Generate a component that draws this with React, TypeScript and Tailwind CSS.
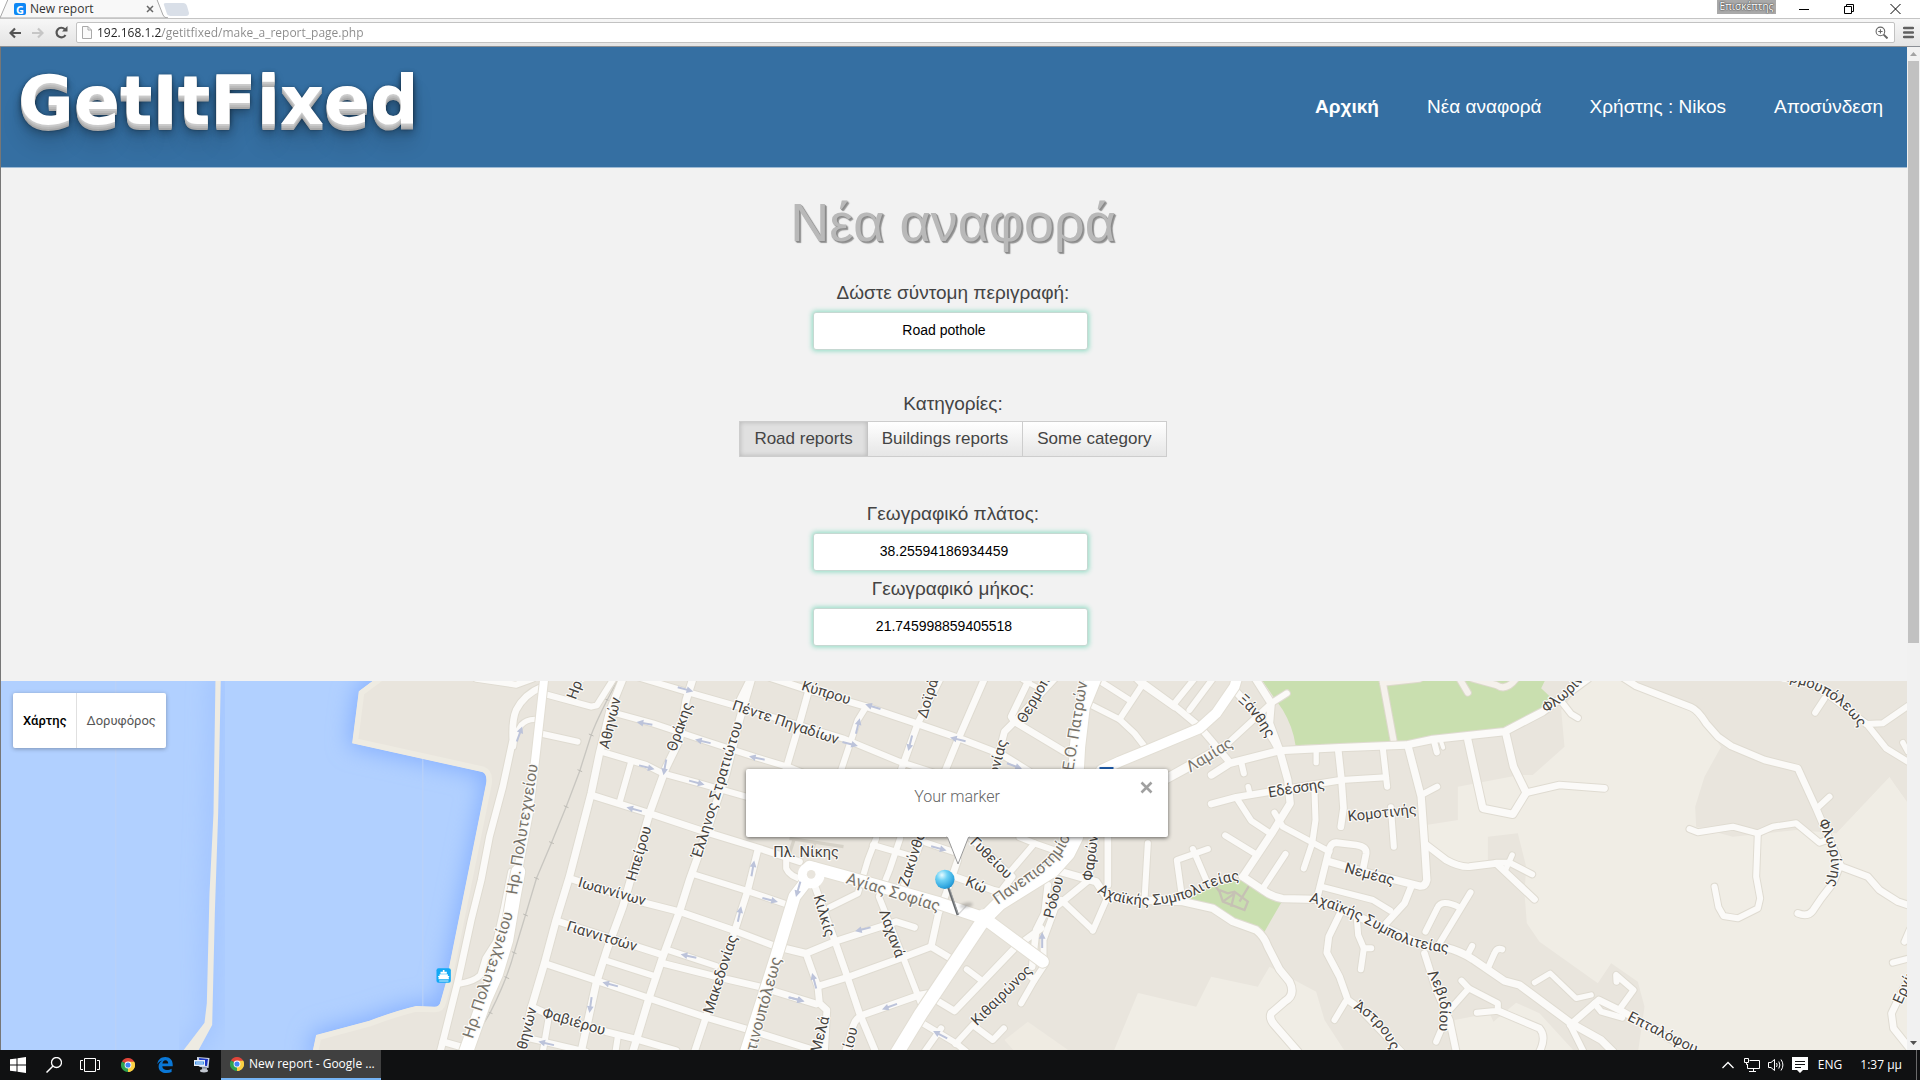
import React from "react";

/* ---------- Map data: each path lives on a tile that starts at x = tile px, in thirds of a pixel ---------- */

type Road = [tile: number, width: number, d: string];

const ROADS: Road[] = [
  // harbour front
  [400, 18, "M230 -4L350 14L400 -4"],
  [400, 20, "M425 22Q375 42 350 90Q337 120 340 180L325 250L310 320L270 470L245 600L215 720L175 905L130 1085L122 1115"],
  [400, 16, "M405 118Q380 118 365 135Q345 165 342 200"],
  [400, 18, "M430 162L534 185"],
  [400, 18, "M435 42L575 80L592 76L640 0"],
  [400, 18, "M335 575L312 690L290 785L258 835L243 885Q225 905 175 912"],
  [400, 20, "M130 1085L200 1105"],
  // west grid
  [400, 22, "M670 -4L632 90L600 220L575 340L510 590L470 720L435 850L395 985L370 1115"],
  [400, 18, "M690 -16L870 38L1000 75L1330 175L1500 245L1640 290"],
  [400, 18, "M650 100L760 130L910 180L1070 232L1170 262L1240 290"],
  [400, 18, "M605 215L740 255L790 280L900 310L1040 350"],
  [400, 20, "M575 345L750 400L900 450L1080 505L1200 545"],
  [400, 20, "M510 595L740 670L840 695L1000 750L1130 800L1210 820"],
  [400, 18, "M880 582L1040 632L1170 676"],
  [400, 20, "M470 722L790 825"],
  [400, 18, "M800 808L950 858"],
  [400, 20, "M790 850L950 890L1080 920L1250 972"],
  [400, 18, "M620 842L770 890"],
  [400, 20, "M435 850L600 905L750 955L920 1012L1050 1050L1240 1110"],
  [400, 20, "M395 980L440 1000L620 1055L720 1080L830 1112"],
  [400, 18, "M655 1070L648 1115"],
  [400, 18, "M448 1010L430 1115"],
  [400, 18, "M390 1075L560 1115"],
  [400, 18, "M695 245L660 368"],
  [400, 22, "M880 -4L860 60L840 180L800 262L750 400L710 540L670 680L622 810L590 910L545 1115"],
  [400, 22, "M1056 -4L1020 120L980 280L920 460L870 600L840 695L790 830L750 950L700 1115"],
  [400, 20, "M1075 510L1045 630L1000 770L920 1010L885 1115"],
  // centre
  [740, 20, "M205 40L180 130L140 265"],
  [740, 18, "M30 0L0 60"],
  [740, 20, "M90 -8L200 28L380 80L530 130L660 175L790 225L870 275"],
  [740, 18, "M380 80L355 120L305 270"],
  [740, 20, "M602 -4L535 130L485 270"],
  [740, 20, "M735 -4L655 180L618 270"],
  [740, 20, "M870 -4L815 110L825 125"],
  [740, 20, "M960 -20L825 125L795 155L765 270"],
  [740, 14, "M850 0L905 28"],
  [740, 20, "M825 125L975 215"],
  [740, 18, "M1045 70L1140 118L1185 160L1225 212"],
  [740, 18, "M1070 -4L1170 60"],
  [740, 18, "M1210 12L1140 118"],
  [740, 18, "M1190 -4L1210 15L1305 82"],
  [740, 20, "M1280 300L1350 262"],
  [740, 18, "M140 530L140 565Q150 590 195 600"],
  [740, 18, "M410 475L385 540L355 640L270 682"],
  [740, 18, "M482 475L450 570L418 650L490 830L550 985"],
  [740, 18, "M400 495L510 527"],
  [740, 20, "M548 475L500 600L485 640"],
  [740, 18, "M560 488L640 515"],
  [740, 20, "M655 540L620 640L597 700L575 800"],
  [740, 20, "M640 588L760 630L800 640"],
  [740, 20, "M695 475L818 590L780 640"],
  [740, 18, "M840 472L885 490L800 590"],
  [740, 18, "M885 490L965 518"],
  [740, 22, "M965 575L1070 605L1100 650L1200 665"],
  [740, 20, "M1065 475L1048 600L925 700"],
  [740, 20, "M1105 470L1105 615"],
  [740, 18, "M1225 490L1215 660"],
  [740, 20, "M925 615L915 700L890 750L878 860"],
  [740, 18, "M945 690L912 780L912 850"],
  [740, 18, "M965 660L1060 750"],
  [740, 18, "M1060 752L1100 660"],
  [740, 20, "M225 615L285 780L320 880L360 1000L408 1115"],
  [740, 20, "M100 796L200 820L285 785L430 738L470 725L525 742"],
  [740, 20, "M200 822L235 920L240 970L262 990L255 1115"],
  [740, 20, "M238 918L330 890L490 832L575 800L645 842"],
  [740, 20, "M318 1115L340 1040Q348 1012 375 1003L540 945L595 935"],
  [740, 20, "M590 960L645 993L830 800L905 745"],
  [740, 18, "M682 868L722 898"],
  [740, 18, "M550 1030L650 1090L680 1115"],
  [740, 18, "M555 1115L605 1045"],
  [740, 18, "M648 1092L700 1035L760 1080L793 1045"],
  [740, 18, "M862 880L885 900L845 970"],
  [740, 18, "M885 900L918 850"],
  // east
  [1140, 20, "M5 5L105 78L180 140L265 240"],
  [1140, 18, "M105 70L165 -4"],
  [1140, 18, "M150 90L220 -4"],
  [1140, 22, "M348 -4L395 70L390 130L420 210L445 300L452 370L400 455L310 590"],
  [1140, 22, "M285 30L350 100L402 180L420 212"],
  [1140, 18, "M442 40L395 70L265 190"],
  [1140, 20, "M85 290L160 248L265 190"],
  [1140, 22, "M216 285L270 250L420 212L600 203L800 195L880 178L1095 155L1210 95L1345 -4"],
  [1140, 18, "M305 245L313 280"],
  [1140, 16, "M530 212L530 248"],
  [1140, 18, "M884 185L892 217"],
  [1140, 12, "M905 185L911 203"],
  [1140, 20, "M596 208L606 300L612 385L604 440"],
  [1140, 18, "M730 205L743 320"],
  [1140, 18, "M606 300L740 292"],
  [1140, 22, "M806 200L845 350L855 490L862 600Q858 620 840 618L690 580L570 545"],
  [1140, 18, "M845 345L893 320"],
  [1140, 20, "M215 372L290 352L390 335L606 300"],
  [1140, 16, "M326 320L332 345"],
  [1140, 18, "M292 355L335 422L395 462"],
  [1140, 18, "M405 398L430 440L570 515"],
  [1140, 18, "M525 335L528 420L518 490L493 565"],
  [1140, 18, "M754 382L763 500"],
  [1140, 18, "M257 466L345 520"],
  [1140, 18, "M438 522L370 625"],
  [1140, 20, "M535 645L566 520Q572 488 590 488L650 495Q682 500 680 520L670 570"],
  [1140, 18, "M545 620L700 660L752 692"],
  [1140, 22, "M310 590L370 630Q400 652 430 656L530 658L740 745L860 800L920 803Q960 812 1000 838L1095 903L1140 915L1295 1030L1385 1080L1420 1115"],
  [1140, 22, "M0 660L130 665L220 685L280 725L350 750Q375 770 385 800L420 868L450 905Q470 945 435 965L395 1000Q388 1015 405 1035L475 1115"],
  [1140, 18, "M128 655L112 540L205 507"],
  [1140, 18, "M160 507L202 605"],
  [1140, 20, "M815 620L795 670L740 730"],
  [1140, 20, "M602 700L568 770L562 818L600 890L625 960L660 985L785 1115"],
  [1140, 18, "M618 965L585 1020"],
  [1140, 18, "M652 715L656 765L673 805L664 868"],
  [1140, 18, "M673 805L695 805"],
  [1140, 22, "M985 180L1030 385L1120 403L1160 338L1122 260L1100 165"],
  [1140, 20, "M1160 338L1260 315L1395 325"],
  [1140, 20, "M855 490L920 540Q960 562 990 560L1070 550L1185 658"],
  [1140, 18, "M1070 548L1110 548L1178 583"],
  [1140, 16, "M1118 525L1098 570"],
  [1140, 18, "M858 755L893 685Q905 655 960 682"],
  [1140, 18, "M993 637L900 790"],
  [1140, 20, "M855 820L890 930L930 1020L950 1115"],
  [1140, 18, "M890 1085L930 990L988 925L1075 970L1075 992L1012 998"],
  [1140, 18, "M966 902L988 925"],
  [1140, 20, "M1075 992L1200 1045Q1222 1070 1200 1115"],
  [1140, 18, "M982 828L998 798"],
  [1140, 18, "M1047 860L1065 820Q1072 802 1088 808"],
  [1140, 16, "M1185 908L1232 880L1310 955L1355 945"],
  // far east
  [1520, 20, "M310 -8L350 18L515 82Q535 90 560 130L595 170L635 198L735 240L835 265L890 385L965 560L1045 590L1080 630L1135 665L1175 678"],
  [1520, 18, "M892 385L930 350"],
  [1520, 20, "M958 565L940 610L905 655L880 692Q865 712 835 700"],
  [1520, 18, "M510 447L535 457L640 440L715 460L760 440L830 430L900 488L918 482"],
  [1520, 18, "M715 460L710 590L722 655L715 685L655 715L612 708L597 682L585 620"],
  [1520, 18, "M830 -12L920 40L1040 130L1100 205L1165 245"],
  [1520, 18, "M915 55L887 98"],
  [1520, 18, "M1040 132L1090 130L1165 78"],
  [1520, 16, "M1150 188L1165 215"],
  [1520, 18, "M130 70L155 102L175 114"],
  [1520, 18, "M1120 848L1170 835"],
  [1520, 18, "M1170 750L1155 785"],
  [1520, 20, "M1170 1105L1122 1045L1116 1000L1140 950L1170 890"],
  [1520, 20, "M152 1035L238 960L310 995L520 1115"],
  [1520, 18, "M300 988L342 930L290 885L291 905"],
  [1520, 18, "M225 970L245 995L308 1013"],
  [1520, 18, "M152 1035L192 1115"],
];

const PARK_ROADS: Road[] = [
  [1140, 18, "M728 -4L762 180"],
  [1140, 18, "M730 8L840 -4"],
  [1140, 18, "M960 -4L985 38"],
  [1140, 18, "M1000 -4L1070 15Q1100 35 1130 -4"],
];

const MAIN_ROADS: Road[] = [
  [400, 24, "M434 -4L408 230L388 400L355 575"],
  [400, 42, "M356 575L342 650L320 780L290 880L255 960L198 1120"],
  [740, 36, "M215 585L165 650L110 830L18 1120"],
  [740, 36, "M210 560L320 590L600 670L735 715L910 845"],
  [740, 40, "M735 715L545 1000L472 1120"],
  [740, 46, "M1062 -4L1028 80L1014 200L1010 270"],
  [740, 42, "M1010 470L985 520L940 570L780 670L735 715"],
  [740, 30, "M1085 270L1140 245L1225 210L1380 145L1430 100L1485 20L1492 -4"],
];

type Label = { t: string; tile: number; p: [number, number, number, number]; soft?: boolean };

const LABELS: Label[] = [
  { t: "Ηρα", tile: 400, p: [515, 58, 545, -22] },
  { t: "Αθηνών", tile: 400, p: [615, 203, 650, 55] },
  { t: "Θράκης", tile: 400, p: [816, 210, 865, 70] },
  { t: "Έλληνος Στρατιώτου", tile: 400, p: [892, 530, 1015, 128] },
  { t: "Ηπείρου", tile: 400, p: [695, 600, 742, 442] },
  { t: "Ιωαννίνων", tile: 400, p: [537, 606, 738, 664] },
  { t: "Γιαννιτσών", tile: 400, p: [498, 736, 716, 802] },
  { t: "Φαβιέρου", tile: 400, p: [432, 998, 615, 1052] },
  { t: "Μακεδονίας", tile: 400, p: [926, 998, 1000, 768] },
  { t: "Αθηνών", tile: 400, p: [360, 1133, 398, 985] },
  { t: "Πέντε Πηγαδίων", tile: 400, p: [1000, 75, 1316, 180] },
  { t: "Ηρ. Πολυτεχνείου", tile: 400, p: [338, 645, 402, 250], soft: true },
  { t: "Ηρ. Πολυτεχνείου", tile: 400, p: [206, 1075, 328, 695], soft: true },
  { t: "Κωνσταντινουπόλεως", tile: 740, p: [-10, 1275, 106, 856], soft: true },
  { t: "Κύπρου", tile: 740, p: [188, 16, 332, 60] },
  { t: "Δοϊράνης", tile: 740, p: [550, 104, 600, -60] },
  { t: "Θερμοπυλών", tile: 740, p: [850, 116, 968, -90] },
  { t: "Μακεδονίας", tile: 740, p: [732, 400, 785, 196] },
  { t: "Ν.Ε.Ο. Πατρών", tile: 740, p: [980, 320, 1030, 2], soft: true },
  { t: "Πλ. Νίκης", tile: 740, p: [112, 518, 288, 518] },
  { t: "Αγίας Σοφίας", tile: 740, p: [320, 595, 602, 682], soft: true },
  { t: "Κιλκίς", tile: 740, p: [235, 645, 272, 770] },
  { t: "Λαχανά", tile: 740, p: [432, 690, 482, 830] },
  { t: "Ζακύνθου", tile: 740, p: [494, 610, 550, 440] },
  { t: "Γυθείου", tile: 740, p: [698, 478, 812, 590] },
  { t: "Κώ", tile: 740, p: [680, 602, 740, 628] },
  { t: "Φαρών", tile: 740, p: [1045, 598, 1062, 468] },
  { t: "Ρόδου", tile: 740, p: [928, 712, 958, 592] },
  { t: "Κιθαιρώνος", tile: 740, p: [702, 1030, 872, 862] },
  { t: "Μελά", tile: 740, p: [230, 1112, 254, 1015] },
  { t: "Σμολίου", tile: 740, p: [304, 1198, 340, 1045] },
  { t: "Λαμίας", tile: 1140, p: [152, 262, 270, 190], soft: true },
  { t: "Εδέσσης", tile: 1140, p: [388, 338, 554, 312] },
  { t: "Κομοτινής", tile: 1140, p: [626, 410, 830, 388] },
  { t: "Νεμέας", tile: 1140, p: [618, 564, 762, 602] },
  { t: "Εργίνου", tile: 1520, p: [1135, 965, 1195, 830] },
];

type CurvedLabel = { t: string; tile: number; d: string; soft?: boolean };

const CURVED: CurvedLabel[] = [
  { t: "Πανεπιστημίου", tile: 740, d: "M775 675L880 600Q985 530 1000 440L1000 380", soft: true },
  { t: "Αχαϊκής Συμπολιτείας", tile: 740, d: "M1072 636Q1130 676 1230 676Q1330 670 1400 628Q1450 605 1530 598" },
  { t: "Αχαϊκής Συμπολιτείας", tile: 1140, d: "M508 665Q620 698 715 750Q815 815 950 818" },
  { t: "Ξάνθης", tile: 1140, d: "M294 62Q345 105 382 175L410 240" },
  { t: "Λεβιδίου", tile: 1140, d: "M862 880Q900 940 902 985L898 1060" },
  { t: "Άστρους", tile: 1140, d: "M640 985Q720 1030 750 1100L765 1150" },
  { t: "Φλωρίνης", tile: 1520, d: "M80 100Q140 60 185 10L230 -50" },
  { t: "Φλωρίνης", tile: 1520, d: "M896 424L922 488Q945 545 925 610L900 670" },
  { t: "Ερμουπόλεως", tile: 1520, d: "M785 0Q945 28 1020 145L1040 190" },
  { t: "Επταλόφου", tile: 1520, d: "M322 1020Q420 1070 540 1128" },
];

const ARROWS: [number, number, number, number][] = [
  [400, 360, 162, -70], [400, 858, 28, 15], [400, 735, 130, 190], [400, 910, 184, 193], [400, 1072, 234, 192],
  [400, 742, 262, 14], [400, 796, 262, 100], [400, 892, 308, 15], [400, 704, 388, 195], [400, 1060, 565, -80],
  [400, 1112, 660, 14], [400, 1020, 702, -78], [400, 867, 828, 192], [400, 632, 913, 195], [400, 573, 975, 98],
  [400, 440, 1090, 193], [400, 1190, 958, 14],
  [740, 400, 80, 197], [740, 355, 138, -76], [740, 332, 192, 15], [740, 512, 190, 104], [740, 655, 178, 194],
  [740, 825, 258, 20], [740, 598, 505, 15], [740, 176, 628, 106], [740, 370, 748, 166], [740, 224, 902, -105],
  [740, 172, 958, 15], [740, 450, 980, 160], [740, 602, 1064, 208], [740, 908, 780, -90],
];

const TICKS: [number, number][] = [
  [620, 58], [575, 165], [541, 272], [500, 380], [456, 488], [411, 595], [378, 705], [344, 818], [322, 893], [272, 998],
];

const at = (tile: number) => `translate(${tile} 680) scale(0.33333)`;

function RoadSet({ roads, casing, fill }: { roads: Road[]; casing: string; fill: string }) {
  return (
    <g fill="none" strokeLinecap="round" strokeLinejoin="round">
      {roads.map(([tile, w, d], i) => (
        <path key={`c${i}`} transform={at(tile)} d={d} stroke={casing} strokeWidth={w + 6} />
      ))}
      {roads.map(([tile, w, d], i) => (
        <path key={`f${i}`} transform={at(tile)} d={d} stroke={fill} strokeWidth={w} />
      ))}
    </g>
  );
}

const LAND =
  "M1150 -20L1078 34L1058 190L1448 276Q1464 282 1460 310L1340 905L1323 965Q1320 980 1305 980L1250 978Q1190 992 1110 1022L950 1065L936 1130L8000 1130L8000 -20Z";

function StreetMap() {
  return (
    <svg
      className="block h-full w-full"
      viewBox="1 681 1907 369"
      preserveAspectRatio="xMidYMid slice"
      fontFamily="Roboto, 'Noto Sans', sans-serif"
      aria-label="Χάρτης"
      role="img"
    >
      <defs>
        <filter id="shore" x="-20%" y="-20%" width="140%" height="140%">
          <feGaussianBlur stdDeviation="34" />
        </filter>
        <filter id="soft" x="-50%" y="-50%" width="200%" height="200%">
          <feGaussianBlur stdDeviation="4" />
        </filter>
        <clipPath id="land">
          <path d={LAND} />
        </clipPath>
        <radialGradient id="ball" cx="0.35" cy="0.28" r="0.8">
          <stop offset="0" stopColor="#e8fbff" />
          <stop offset="0.35" stopColor="#6fd2f5" />
          <stop offset="0.8" stopColor="#2ea5df" />
          <stop offset="1" stopColor="#1b86c2" />
        </radialGradient>
      </defs>

      <rect x="0" y="680" width="1920" height="380" fill="#b1d0ff" />
      <g transform={at(0)}>
        <path d={LAND} fill="#86b0ff" stroke="#86b0ff" strokeWidth="20" filter="url(#shore)" />
        <path d="M656 -20L648 400L636 700L629 1030L560 1130" fill="none" stroke="#9cc0ff" strokeWidth="40" filter="url(#shore)" />
        <path d="M349 0V1110M1270 0V1110" stroke="#bcd2f6" strokeWidth="3" />
        <path d="M648 -10L664 -10L656 400L646 700L638 1035L592 1120L545 1120L615 1028L622 970L630 640L642 400Z" fill="#eeebe2" />
        <path d={LAND} fill="#e9e5dd" stroke="#eeebe2" strokeWidth="34" strokeLinejoin="round" clipPath="url(#land)" />
      </g>

      {/* open land and parks */}
      <g transform={at(1520)}>
        <path
          d="M205 -10L310 -10L530 90L605 200L555 290L527 380L530 440L640 470L830 450L950 460L1110 290L1170 375L1170 1120L355 1120L375 980L355 905L275 850L235 910L60 785L22 730L15 640L20 560L-5 460L-95 470L-95 545L-160 560L-280 490L-280 435L-185 420L-185 320L0 285L40 285L135 200L125 90Z"
          fill="#f0ede5"
        />
        <path d="M540 0Q560 150 605 200L835 265L950 460L1110 290L1170 375V0Z" fill="#e9e5dd" />
      </g>
      <g transform={at(1140)}>
        <path d="M0 940L170 980L215 890L355 920L390 860L530 935L555 1020L620 1120L-80 1120L-5 940Z" fill="#f0ede5" />
        <path d="M-335 1025L-405 1080L-370 1120L-200 1120Z" fill="#efebe2" />
        <path d="M945 1020L1050 1000L1062 1025L1130 968L1200 1000L1310 1120L950 1120Z" fill="#f0ede5" />
        <path d="M360 -10L430 90Q460 140 468 195L800 190L1095 145L1200 95L1232 50L1205 25L1222 -10Z" fill="#c9dfaf" />
        <path d="M150 655Q240 600 305 598L425 668L375 755L290 720L220 680Z" fill="#c9dfaf" />
        <path
          d="M225 615L240 635L250 665L315 690L325 665L285 635L265 640L240 630M285 640L275 680M330 615L300 665M250 665L285 640"
          fill="none"
          stroke="#c6c1b4"
          strokeWidth="7"
        />
      </g>
      <path transform={at(740)} d="M150 475L312 500M165 475L150 520M225 490L215 520" fill="none" stroke="#d6d2c8" strokeWidth="10" />

      <path
        transform={at(400)}
        d="M655 0Q600 100 575 165L541 272L500 380L456 488L411 595L378 705L344 818Q322 900 272 998L205 1110"
        fill="none"
        stroke="#c8c6c0"
        strokeWidth="4"
      />
      <g transform={at(400)} stroke="#bdbbb5" strokeWidth="3">
        {TICKS.map(([x, y]) => (
          <path key={y} d={`M${x - 7} ${y - 3}L${x + 7} ${y + 3}`} />
        ))}
      </g>

      <RoadSet roads={PARK_ROADS} casing="#ddd9cc" fill="#f5f1ec" />
      <RoadSet roads={ROADS} casing="#dfdbd1" fill="#fbfaf8" />
      <RoadSet roads={MAIN_ROADS} casing="#e2ded4" fill="#ffffff" />
      <g transform={at(740)}>
        <circle cx="215" cy="585" r="40" fill="#fff" />
        <circle cx="215" cy="583" r="13" fill="#e9e5dd" />
        <circle cx="735" cy="715" r="28" fill="#fff" />
      </g>

      <g fill="none" stroke="#bcc3da" strokeWidth="6">
        {ARROWS.map(([tile, x, y, a], i) => (
          <g key={i} transform={`${at(tile)} translate(${x} ${y}) rotate(${a})`}>
            <path d="M-24 0H12" />
            <path d="M4 -10L24 0L4 10Z" fill="#bcc3da" stroke="none" />
          </g>
        ))}
      </g>

      <g strokeLinejoin="round" style={{ paintOrder: "stroke" }}>
        {LABELS.map((l, i) => {
          const [x1, y1, x2, y2] = l.p;
          const angle = (Math.atan2(y2 - y1, x2 - x1) * 180) / Math.PI;
          return (
            <text
              key={i}
              transform={`${at(l.tile)} translate(${(x1 + x2) / 2} ${(y1 + y2) / 2}) rotate(${angle})`}
              textAnchor="middle"
              y="14"
              fontSize={l.soft ? 48 : 44}
              fill={l.soft ? "#77736a" : "#45423d"}
              stroke="#fbfaf8"
              strokeWidth="7"
            >
              {l.t}
            </text>
          );
        })}
        {CURVED.map((l, i) => (
          <g key={i} transform={at(l.tile)}>
            <path id={`street-${i}`} d={l.d} fill="none" stroke="none" />
            <text fontSize={l.soft ? 48 : 44} fill={l.soft ? "#77736a" : "#45423d"} stroke="#fbfaf8" strokeWidth="7">
              <textPath href={`#street-${i}`}>{l.t}</textPath>
            </text>
          </g>
        ))}
      </g>

      {/* ferry stop */}
      <g transform={at(0)}>
        <rect x="1311" y="865" width="43" height="43" rx="6" fill="#12a9f5" />
        <path d="M1330 870h5v5h7v6h-19v-6h7zM1320 883h25v5h5l-5 8h-25l-5-8h5zM1317 893h31v5h-31z" fill="#fff" />
        <path d="M1319 901h28v4h-28z" fill="#a8e0fb" />
      </g>
      <rect x="1100" y="767" width="14" height="6" fill="#1f5fb0" />

      {/* marker */}
      <g transform={at(740)}>
        <ellipse cx="680" cy="676" rx="20" ry="7" fill="#000" opacity="0.22" filter="url(#soft)" transform="rotate(-12 680 676)" />
        <path d="M655 705L680 678" stroke="#888" strokeWidth="4" opacity="0.3" />
        <path d="M624 615L655 705" stroke="#66696c" strokeWidth="7" />
        <path d="M627 615L656 703" stroke="#b5b8ba" strokeWidth="2" />
        <circle cx="616" cy="598" r="29" fill="url(#ball)" />
      </g>
    </svg>
  );
}

/* ---------- Small drawings ---------- */

function ChromeLogo({ className }: { className: string }) {
  return (
    <svg className={className} viewBox="0 0 24 24" aria-hidden="true">
      <path d="M12 12L1.6 6A12 12 0 0 1 22.4 6Z" fill="#e0453a" />
      <path d="M12 12L22.4 6A12 12 0 0 1 12 24Z" fill="#fbd043" />
      <path d="M12 12L12 24A12 12 0 0 1 1.6 6Z" fill="#2fa24f" />
      <path d="M12 6.4H22.4A12 12 0 0 1 12 24L17 15Z" fill="#fbd043" />
      <circle cx="12" cy="12" r="5.8" fill="#fff" />
      <circle cx="12" cy="12" r="4.4" fill="#4285f4" />
    </svg>
  );
}

function BrowserChrome() {
  return (
    <div className="font-['Open_Sans','Noto_Sans',sans-serif] text-xs">
      <div className="flex h-[18px] justify-between bg-white">
        <div className="relative flex">
          <svg className="absolute inset-0 h-[18px] w-[192px]" viewBox="0 0 192 18" aria-hidden="true">
            <path d="M0 18L9 -3H156L163 15Q164 18 168 18Z" fill="#f8f8f8" stroke="#a8a8a8" />
            <path d="M164 5Q163 3 166 3H183Q186 3 187 6L189 13Q189 16 186 16H172Q168 16 167 14Z" fill="#d9dfe8" />
          </svg>
          <div className="relative flex h-[18px] items-center pl-[14px]">
            <span className="flex size-[12px] items-center justify-center rounded-xs bg-[#0d87f5] text-[11px] font-bold leading-none text-white">G</span>
            <span className="ml-1 w-[111px] leading-[18px] text-[#333]">New report</span>
            <button type="button" aria-label="Close tab" className="ml-[5px] flex">
              <svg className="size-[8px]" viewBox="0 0 8 8"><path d="M1 1L7 7M7 1L1 7" stroke="#666" strokeWidth="1.5" /></svg>
            </button>
          </div>
        </div>
        <div className="flex items-start pr-[19px]">
          <span className="mr-[23px] h-[14px] w-[59px] bg-[#a9a9a9] text-center text-[10px] leading-[13px] text-white [text-shadow:0_0_2px_#333,0_0_1px_#333]">Επισκέπτης</span>
          <button type="button" aria-label="Minimize" className="mr-[34px]">
            <svg className="h-[18px] w-[11px]" viewBox="0 0 11 18"><path d="M0 9.500H10" stroke="#000" /></svg>
          </button>
          <button type="button" aria-label="Restore" className="mr-[35px]">
            <svg className="h-[18px] w-[11px]" viewBox="0 0 11 18"><path d="M.5 6.500H7.500V13.500H.5ZM2.500 6.500V4.500H9.500V11.500H7.500" fill="none" stroke="#000" /></svg>
          </button>
          <button type="button" aria-label="Close">
            <svg className="h-[18px] w-[11px]" viewBox="0 0 11 18"><path d="M.5 4L10.500 14M10.500 4L.5 14" stroke="#000" /></svg>
          </button>
        </div>
      </div>

      <div className="flex h-[29px] items-center border-t border-b border-t-[#c4c4c4] border-b-[#8b8f95] bg-linear-to-b from-[#f7f7f7] to-[#e4e4e4] pr-[6px] pl-[9px]">
        <button type="button" aria-label="Back"><svg className="h-3 w-3" viewBox="0 0 12 12"><path d="M6 1.500L1.500 6L6 10.500M2 6H12" fill="none" stroke="#555" strokeWidth="2.200" /></svg></button>
        <button type="button" aria-label="Forward" className="ml-[11px]"><svg className="h-3 w-3" viewBox="0 0 12 12"><path d="M6 1.500L10.500 6L6 10.500M0 6H10" fill="none" stroke="#c6c6c6" strokeWidth="2.200" /></svg></button>
        <button type="button" aria-label="Reload" className="ml-[11px]">
          <svg className="h-[13px] w-[13px]" viewBox="0 0 13 13"><path d="M10.500 9A4.800 4.800 0 1 1 9.800 3.200" fill="none" stroke="#555" strokeWidth="2.200" /><path d="M12.500 0V5.500H7Z" fill="#555" /></svg>
        </button>
        <div className="ml-2 flex h-[21px] flex-1 items-center rounded-xs border border-[#c2c2c2] bg-white px-[5px]">
          <svg className="h-[13px] w-[10px]" viewBox="0 0 10 13" aria-hidden="true"><path d="M.5 .5H6L9.500 4V12.500H.5ZM6 .5V4H9.500" fill="#fafafa" stroke="#a9a9a9" /></svg>
          <input
            type="text"
            aria-label="Address"
            defaultValue="192.168.1.2/getitfixed/make_a_report_page.php"
            className="ml-[5px] h-[19px] min-w-0 flex-1 bg-[linear-gradient(90deg,#222_65px,#8a8a8a_65px)] bg-clip-text text-transparent outline-none"
          />
          <svg className="mr-px size-[13px]" viewBox="0 0 12 12" aria-hidden="true"><circle cx="5" cy="5" r="4" fill="none" stroke="#666" /><path d="M3 5H7M5 3V7" stroke="#666" /><path d="M8 8L11.500 11.500" stroke="#666" strokeWidth="1.800" /></svg>
        </div>
        <button type="button" aria-label="Menu" className="ml-2"><svg className="h-[13px] w-[11px]" viewBox="0 0 11 13"><path d="M1 2H10M1 6.500H10M1 11H10" stroke="#606060" strokeWidth="2.500" strokeLinecap="round" /></svg></button>
      </div>
    </div>
  );
}

function SiteHeader() {
  return (
    <header className="flex h-[121px] items-center justify-between border-b border-[#9dbad5] bg-[#356fa2] pr-6 pl-[17px]">
      <a
        href="#home"
        className="-mt-[13px] font-['DejaVu_Sans',sans-serif] text-[68px] leading-none font-bold text-white [text-shadow:0_1px_0_#ccc,0_2px_0_#c9c9c9,0_3px_0_#bbb,0_4px_0_#b9b9b9,0_5px_0_#aaa,0_6px_0_#a8a8a8,0_7px_1px_rgba(0,0,0,.1),0_0_5px_rgba(0,0,0,.1),0_1px_3px_rgba(0,0,0,.3),0_3px_5px_rgba(0,0,0,.2),0_5px_10px_rgba(0,0,0,.25),0_10px_10px_rgba(0,0,0,.2),0_20px_20px_rgba(0,0,0,.15)]"
      >
        GetItFixed
      </a>
      <nav className="flex gap-12 text-[19px] text-white">
        <a href="#home" className="font-bold">Αρχική</a>
        <a href="#new">Νέα αναφορά</a>
        <a href="#user">Χρήστης : Nikos</a>
        <a href="#logout">Αποσύνδεση</a>
      </nav>
    </header>
  );
}

function Field({ id, label, value }: { id: string; label: string; value: string }) {
  return (
    <div className="flex flex-col items-center">
      <label htmlFor={id} className="text-[19px] leading-6 text-[#444]">{label}</label>
      <input
        id={id}
        defaultValue={value}
        className="mt-[7px] mr-[6px] h-[38px] w-[275px] rounded-[3px] border border-[#c6d8d2] bg-white pr-4 pb-[2px] pl-1 text-center text-sm text-black shadow-[0_0_5px_1px_#8fdcc4] outline-none"
      />
    </div>
  );
}

const CATEGORIES = ["Road reports", "Buildings reports", "Some category"];

function ReportForm() {
  const [picked, setPicked] = React.useState(CATEGORIES[0]);
  return (
    <form className="flex flex-col items-center bg-[#f2f2f2] pt-[22px] pb-[35px] pr-[2px]">
      <h1 className="text-[54px] leading-[64px] text-[#b9b9b9] [text-shadow:1px_1px_1px_#888,2px_2px_1px_#999]">Νέα αναφορά</h1>
      <div className="mt-[27px]"><Field id="description" label="Δώστε σύντομη περιγραφή:" value="Road pothole" /></div>
      <div id="categories" className="mt-[42px] text-[19px] leading-6 text-[#444]">Κατηγορίες:</div>
      <div role="group" aria-labelledby="categories" className="mt-[5px] flex h-[36px] border border-[#cdcdcd] text-[17px] text-[#444]">
        {CATEGORIES.map((c) => (
          <button
            key={c}
            type="button"
            aria-pressed={picked === c}
            onClick={() => setPicked(c)}
            className={
              picked === c
                ? "border-r border-[#c4c4c4] bg-[#e0e0e0] px-[14px] shadow-[inset_0_0_5px_#b5b5b5] last:border-r-0"
                : "border-r border-[#cdcdcd] bg-linear-to-b from-white to-[#e6e6e6] px-[14px] last:border-r-0"
            }
          >
            {c}
          </button>
        ))}
      </div>
      <div className="mt-[45px] flex flex-col gap-[6px]">
        <Field id="lat" label="Γεωγραφικό πλάτος:" value="38.25594186934459" />
        <Field id="lng" label="Γεωγραφικό μήκος:" value="21.745998859405518" />
      </div>
    </form>
  );
}

function MapPanel() {
  return (
    <section className="relative min-h-0 flex-1 overflow-hidden font-[Roboto,sans-serif]">
      <StreetMap />
      <div className="absolute top-3 left-3 flex h-[55px] rounded-xs bg-white text-[13px] shadow-[0_1px_4px_rgba(0,0,0,.3)]">
        <button type="button" className="pr-[9px] pl-[10px] font-medium text-black">Χάρτης</button>
        <button type="button" className="border-l border-[#e0e0e0] px-[10px] text-[#565656]">Δορυφόρος</button>
      </div>
      <div className="absolute top-[88px] left-1/2 ml-[3px] h-[68px] w-[422px] -translate-x-1/2 rounded-xs bg-white text-center shadow-[0_1px_4px_rgba(0,0,0,.6)]">
        <p className="pt-4 text-base leading-6 font-light text-[#666]">Your marker</p>
        <button type="button" aria-label="Close" className="absolute top-3 right-[15px]">
          <svg className="size-[13px]" viewBox="0 0 13 13"><path d="M1.500 1.500L11.500 11.500M11.500 1.500L1.500 11.500" stroke="#a0a0a0" strokeWidth="2.600" /></svg>
        </button>
        <svg className="absolute top-[67px] left-[200px] h-[30px] w-6" viewBox="0 0 24 30" aria-hidden="true">
          <path d="M1 0L12 28L23 0" fill="#fff" stroke="#999" strokeWidth="1" />
          <path d="M1 0H23" stroke="#fff" strokeWidth="2" />
        </svg>
      </div>
    </section>
  );
}

function ScrollBar() {
  return (
    <div className="flex w-[13px] flex-col items-center bg-[#f1f1f1]" aria-hidden="true">
      <svg className="h-[14px] w-[7px] shrink-0" viewBox="0 0 7 14"><path d="M0 9L3.500 5L7 9Z" fill="#a3a3a3" /></svg>
      <div className="h-[58%] w-[11px] bg-[#c1c1c1]" />
      <svg className="mt-auto h-[14px] w-[7px] shrink-0" viewBox="0 0 7 14"><path d="M0 5L3.500 9L7 5Z" fill="#505050" /></svg>
    </div>
  );
}

function Taskbar() {
  return (
    <footer className="flex h-[30px] shrink-0 items-center justify-between bg-[#101112] font-['Open_Sans','Noto_Sans',sans-serif] text-xs text-white">
      <div className="flex h-full items-center">
        <button type="button" aria-label="Start" className="ml-[10px]">
          <svg className="size-4" viewBox="0 0 16 16"><path d="M0 2.300L6.500 1.400V7.500H0ZM7.500 1.200L16 0V7.500H7.500ZM0 8.500H6.500V14.600L0 13.700ZM7.500 8.500H16V16L7.500 14.800Z" fill="#fff" /></svg>
        </button>
        <button type="button" aria-label="Search" className="ml-5">
          <svg className="size-4" viewBox="0 0 16 16"><circle cx="10.500" cy="5.500" r="5" fill="none" stroke="#fff" strokeWidth="1.300" /><path d="M7 9L.5 15.500" stroke="#fff" strokeWidth="1.500" /></svg>
        </button>
        <button type="button" aria-label="Task view" className="ml-[18px]">
          <svg className="h-4 w-5" viewBox="0 0 20 16"><path d="M4.500 1.500H15.500V14.500H4.500ZM3 3.500H.5V12.500H3M17 3.500H19.500V12.500H17" fill="none" stroke="#fff" /></svg>
        </button>
        <button type="button" aria-label="Chrome" className="ml-[21px]"><ChromeLogo className="size-[14px]" /></button>
        <button type="button" aria-label="Edge" className="ml-[22px]">
          <svg className="size-4" viewBox="0 0 16 16"><path d="M.3 7.200C.8 2.800 3.900 0 8.200 0C13 0 15.700 3.400 15.700 7.500V9.300H5.300C5.400 11.800 7.400 13 9.900 13C11.800 13 13.300 12.500 14.600 11.700V15C13.100 15.700 11.400 16 9.400 16C4.700 16 1.600 13.500 1.600 9.400C1.600 6.700 3.100 4.500 5.600 3.400C3 3.600 1.300 5.200 .3 7.200ZM5.400 6.500H11.200C11.200 4.600 10.300 3.300 8.400 3.300C6.700 3.300 5.600 4.600 5.400 6.500Z" fill="#0a78d7" /></svg>
        </button>
        <button type="button" aria-label="Remote desktop" className="ml-[21px]">
          <svg className="size-4" viewBox="0 0 16 16">
            <path d="M3 0L15.500 1L14.500 11L6 10L3 8Z" fill="#c9d3e6" />
            <path d="M5 1L14 2L13 9L6 8.500Z" fill="#1c36c4" />
            <path d="M8 10L13 11V13H8Z" fill="#9aa2b0" />
            <ellipse cx="10" cy="13.800" rx="4" ry="1.700" fill="#c2c7d0" />
            <path d="M0 3H11V9H0Z" fill="#e8eef8" />
            <path d="M1 4.500H10V7.500H1Z" fill="#3d8fe6" />
            <path d="M2 6H9" stroke="#cfe4fb" />
          </svg>
        </button>
        <button type="button" className="ml-[11px] flex h-full w-40 items-center border-b-2 border-[#76b4f5] bg-[#404040] pl-[9px]">
          <ChromeLogo className="size-[14px]" />
          <span className="ml-[5px] whitespace-nowrap">New report - Google ...</span>
        </button>
      </div>
      <div className="flex h-full items-center">
        <svg className="h-4 w-3" viewBox="0 0 12 16" aria-hidden="true"><path d="M.5 11L6 5.500L11.500 11" fill="none" stroke="#fff" strokeWidth="1.300" /></svg>
        <svg className="ml-[10px] h-4 w-4" viewBox="0 0 16 16" aria-hidden="true"><path d="M5.500 3.500H15.500V11.500H3.500V7M9.500 11.500V14M5 14.500H12M.5 1.500H4.500V5.500H.5ZM2.500 5.500V7.500H4" fill="none" stroke="#fff" /></svg>
        <svg className="ml-2 h-4 w-4" viewBox="0 0 16 16" aria-hidden="true"><path d="M.5 5.500H3L6.500 2.500V13.500L3 10.500H.5ZM8.500 6Q9.800 8 8.500 10M10.800 4.500Q13 8 10.800 11.500M13 2.500Q16.800 8 13 13.500" fill="none" stroke="#fff" /></svg>
        <svg className="ml-2 h-4 w-4" viewBox="0 0 16 16" aria-hidden="true"><path d="M0 0H16V13H11L8 16L5 13H0Z" fill="#fff" /><path d="M3 4.500H13M3 7.500H13M3 10.500H9" stroke="#101112" /></svg>
        <span className="ml-[10px]">ENG</span>
        <span className="ml-[18px]">1:37 μμ</span>
        <span className="ml-[14px] h-full w-1 border-l border-[#6a6a6a]" />
      </div>
    </footer>
  );
}

export default function App() {
  return (
    <div className="flex h-screen flex-col overflow-hidden bg-[#f2f2f2] font-['Liberation_Sans',Arial,sans-serif]">
      <BrowserChrome />
      <div className="flex min-h-0 flex-1">
        <main className="flex min-w-0 flex-1 flex-col border-l border-[#777]">
          <SiteHeader />
          <ReportForm />
          <MapPanel />
        </main>
        <ScrollBar />
      </div>
      <Taskbar />
    </div>
  );
}
